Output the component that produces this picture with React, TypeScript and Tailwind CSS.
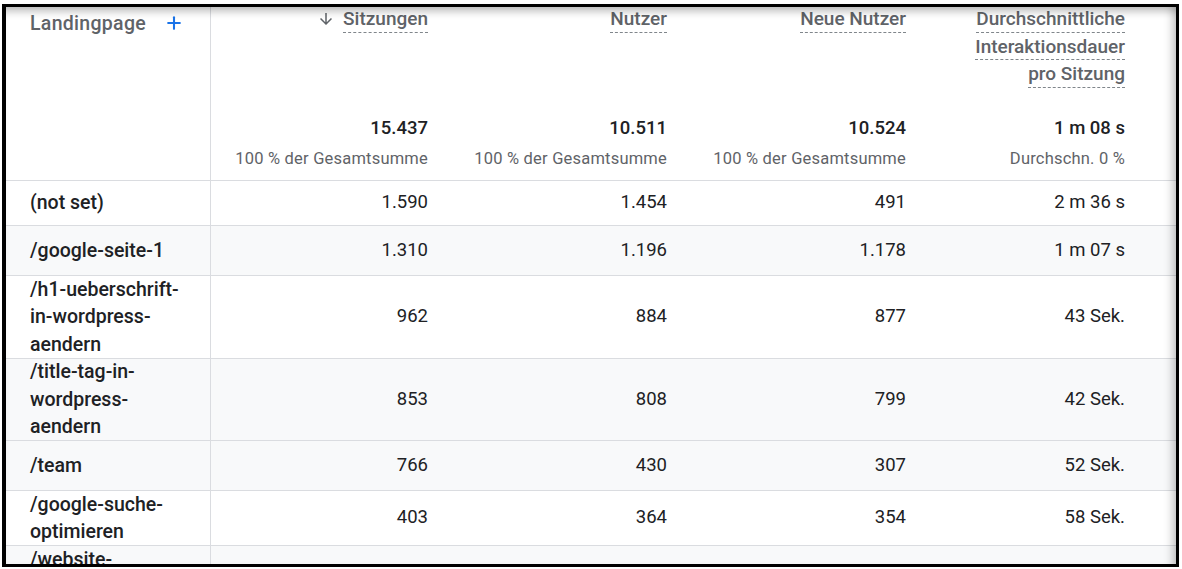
import { Plus } from "lucide-react";

type Row = { label: string[]; values: string[]; h: string; shaded: boolean };

const rows: Row[] = [
  { label: ["(not set)"], values: ["1.590", "1.454", "491", "2 m 36 s"], h: "h-[45px]", shaded: false },
  { label: ["/google-seite-1"], values: ["1.310", "1.196", "1.178", "1 m 07 s"], h: "h-[50px]", shaded: true },
  { label: ["/h1-ueberschrift-", "in-wordpress-", "aendern"], values: ["962", "884", "877", "43 Sek."], h: "h-[83px]", shaded: false },
  { label: ["/title-tag-in-", "wordpress-", "aendern"], values: ["853", "808", "799", "42 Sek."], h: "h-[82px]", shaded: true },
  { label: ["/team"], values: ["766", "430", "307", "52 Sek."], h: "h-[50px]", shaded: true },
  { label: ["/google-suche-", "optimieren"], values: ["403", "364", "354", "58 Sek."], h: "h-[55px]", shaded: false },
  { label: ["/website-", "erstellen"], values: ["381", "350", "341", "49 Sek."], h: "h-[56px]", shaded: true },
];

const metrics = [
  { title: ["Sitzungen"], total: "15.437", sub: "100 % der Gesamtsumme", sorted: true },
  { title: ["Nutzer"], total: "10.511", sub: "100 % der Gesamtsumme" },
  { title: ["Neue Nutzer"], total: "10.524", sub: "100 % der Gesamtsumme" },
  { title: ["Durchschnittliche", "Interaktionsdauer", "pro Sitzung"], total: "1 m 08 s", sub: "Durchschn. 0 %" },
];

const colWidths = ["w-[239px]", "w-[239px]", "w-[239px]", "w-[219px]"];

function SortArrow() {
  return (
    <svg width="18" height="18" viewBox="0 0 24 24" className="mr-[8px] mt-[3px] shrink-0" fill="#5f6368">
      <path d="M20 12l-1.41-1.41L13 16.17V4h-2v12.17l-5.58-5.59L4 12l8 8 8-8z" />
    </svg>
  );
}

export default function App() {
  return (
    <div className="w-[1182px] h-[569px] bg-white overflow-hidden" style={{ fontFamily: "Roboto, 'Liberation Sans', sans-serif" }}>
      <div className="relative ml-[2px] mt-[4px] w-[1177px] h-[563px] border-[3px] border-l-4 border-black overflow-hidden bg-white">
        {/* header */}
        <div className="flex h-[174px] border-b border-[#dadce0]">
          <div className="w-[205px] shrink-0 border-r border-[#dadce0] pl-[24px] pt-[3px] flex items-start">
            <span className="text-[19.5px] leading-[27.5px] tracking-[0.3px] font-medium text-[#5f6368]">Landingpage</span>
            <Plus className="ml-[18px] mt-[3px] w-[20px] h-[20px] text-[#1a73e8]" strokeWidth={2.5} />
          </div>
          {metrics.map((m, i) => (
            <div key={i} className={`${colWidths[i]} shrink-0 pr-[22px] flex flex-col items-end`}>
              <div className="flex items-start">
                {m.sorted && <SortArrow />}
                <div className="flex flex-col items-end">
                  {m.title.map((t) => (
                    <span key={t} className="text-[19px] leading-[24.5px] font-medium text-[#5f6368] border-b border-dashed border-[#80868b] mb-[2px]">
                      {t}
                    </span>
                  ))}
                </div>
              </div>
              <div className="mt-auto flex flex-col items-end pb-[11px]">
                <span className="text-[18.5px] leading-[24px] font-medium text-[#202124]">{m.total}</span>
                <span className="mt-[9px] text-[16.5px] leading-[20px] tracking-[0.2px] text-[#5f6368]">{m.sub}</span>
              </div>
            </div>
          ))}
          <div className="flex-1" />
        </div>

        {/* rows */}
        {rows.map((r, idx) => (
          <div key={idx} className={`flex ${r.h} border-b border-[#dadce0] ${r.shaded ? "bg-[#f8f9fa]" : "bg-white"}`}>
            <div className="w-[205px] shrink-0 border-r border-[#dadce0] pl-[24px] flex flex-col justify-center">
              {r.label.map((l) => (
                <span key={l} className="text-[19.5px] leading-[27.5px] font-medium text-[#202124]">{l}</span>
              ))}
            </div>
            {r.values.map((v, i) => (
              <div key={i} className={`${colWidths[i]} shrink-0 pr-[22px] flex items-center justify-end`}>
                <span className="text-[18.5px] leading-[27.5px] text-[#202124]">{v}</span>
              </div>
            ))}
            <div className="flex-1" />
          </div>
        ))}

        {/* screenshot shadow */}
        <div className="pointer-events-none absolute inset-0 shadow-[inset_0_10px_8px_-6px_rgba(0,0,0,0.28),inset_-10px_0_8px_-6px_rgba(0,0,0,0.22)]" />
      </div>
    </div>
  );
}
